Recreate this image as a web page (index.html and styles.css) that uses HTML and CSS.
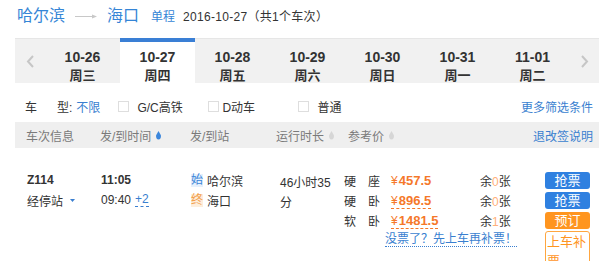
FILE: index.html
```html
<!DOCTYPE html>
<html lang="zh-CN">
<head>
<meta charset="utf-8">
<title>哈尔滨 — 海口</title>
<link rel="stylesheet" href="styles.css">
</head>
<body>
<div class="top">
  <span class="city">哈尔滨</span>
  <svg class="route-arrow" width="26" height="6" viewBox="0 0 26 6"><line x1="3" y1="3.5" x2="20" y2="3.5" stroke="#c8c8c8" stroke-width="1"/><polygon points="20,1.5 25,3.5 20,5.5" fill="#c8c8c8"/></svg>
  <span class="city city-to">海口</span>
  <span class="trip-type">单程</span>
  <span class="trip-date">2016-10-27（共1个车次）</span>
</div>

<div class="dates">
  <div class="nav"><svg width="8" height="13" viewBox="0 0 8 13"><polyline points="7,1 2,6.5 7,12" fill="none" stroke="#c6c6c6" stroke-width="2"/></svg></div>
  <div class="day"><div class="day-d">10-26</div><div class="day-w">周三</div></div>
  <div class="day day-active"><div class="day-d">10-27</div><div class="day-w">周四</div></div>
  <div class="day"><div class="day-d">10-28</div><div class="day-w">周五</div></div>
  <div class="day"><div class="day-d">10-29</div><div class="day-w">周六</div></div>
  <div class="day"><div class="day-d">10-30</div><div class="day-w">周日</div></div>
  <div class="day"><div class="day-d">10-31</div><div class="day-w">周一</div></div>
  <div class="day"><div class="day-d">11-01</div><div class="day-w">周二</div></div>
  <div class="nav nav-next"><svg width="8" height="13" viewBox="0 0 8 13"><polyline points="1,1 6,6.5 1,12" fill="none" stroke="#c6c6c6" stroke-width="2"/></svg></div>
</div>

<div class="filter">
  <span class="flt-label">车</span><span class="flt-label2">型:</span><span class="link">不限</span>
  <span class="opt opt-first"><span class="cb"></span><span class="opt-text">G/C高铁</span></span>
  <span class="opt"><span class="cb"></span><span class="opt-text opt-text-tight">D动车</span></span>
  <span class="opt"><span class="cb"></span><span class="opt-text">普通</span></span>
  <span class="link more">更多筛选条件</span>
</div>

<div class="thead">
  <span>车次信息</span>
  <span class="th-sort">发/到时间<svg class="sort sort-on" width="5" height="9" viewBox="0 0 5 9"><path d="M2.5 0 L5 4.5 Q5 8.5 2.5 8.5 Q0 8.5 0 4.5 Z"/></svg></span>
  <span>发/到站</span>
  <span class="th-sort">运行时长<svg class="sort" width="5" height="9" viewBox="0 0 5 9"><path d="M2.5 0 L5 4.5 Q5 8.5 2.5 8.5 Q0 8.5 0 4.5 Z"/></svg></span>
  <span class="th-sort">参考价<svg class="sort" width="5" height="9" viewBox="0 0 5 9"><path d="M2.5 0 L5 4.5 Q5 8.5 2.5 8.5 Q0 8.5 0 4.5 Z"/></svg></span>
  <span class="link th-right">退改签说明</span>
</div>

<div class="train">
  <div class="col">
    <div class="line bold">Z114</div>
    <div class="line">经停站<svg class="tri" width="5" height="3" viewBox="0 0 5 3"><polygon points="0,0 5,0 2.5,3" fill="#3a7fd0"/></svg></div>
  </div>
  <div class="col">
    <div class="line bold">11:05</div>
    <div class="line">09:40<span class="plus">+2</span></div>
  </div>
  <div class="col">
    <div class="line"><span class="stn stn-start">始</span>哈尔滨</div>
    <div class="line"><span class="stn stn-end">终</span>海口</div>
  </div>
  <div class="col duration">46小时35分</div>
  <div class="seats">
    <span>硬　座</span><span class="price"><span class="yen">¥</span>457.5</span><span>余<span class="left">0</span>张</span><span class="btn">抢票</span>
    <span>硬　卧</span><span class="price"><span class="price-u"><span class="yen">¥</span>896.5</span></span><span>余<span class="left">0</span>张</span><span class="btn">抢票</span>
    <span>软　卧</span><span class="price"><span class="price-u"><span class="yen">¥</span>1481.5</span></span><span>余<span class="left">1</span>张</span><span class="btn btn-orange">预订</span>
    <span class="nosale"><span class="nosale-link">没票了？先上车再补票！</span></span><span class="btn-outline">上车补票</span>
  </div>
</div>
</body>
</html>
```

FILE: styles.css
```css
body {
  margin: 0;
  background: #fff;
  color: #333;
  font-family: "Liberation Sans", Arial, "Noto Sans CJK SC", sans-serif;
  font-size: 12px;
}

.link { color: #3a7fd0; }
.bold { font-weight: bold; }

/* title */
.top {
  display: flex;
  align-items: baseline;
  height: 32px;
  padding: 6px 0 0 17px;
}
.city {
  font-size: 16px;
  line-height: 20px;
  color: #3585d6;
}
.route-arrow {
  align-self: flex-start;
  margin: 7px 9px 0 7px;
}
.trip-type {
  margin-left: 12px;
  color: #3585d6;
}
.trip-date {
  margin-left: 8px;
  color: #333;
  letter-spacing: 0.3px;
}

/* date strip */
.dates {
  display: flex;
  height: 44px;
  margin-left: 15px;
  background: #f1f1f1;
  border-top: 1px solid #e6e6e6;
}
.nav {
  width: 30px;
  display: flex;
  align-items: center;
  justify-content: center;
}
.nav-next { flex: 1; }
.day {
  width: 75px;
  box-sizing: border-box;
  padding-top: 10px;
  text-align: center;
  font-weight: bold;
  color: #333;
}
.day-d { font-size: 14px; line-height: 16px; }
.day-w { font-size: 13px; line-height: 18px; margin-top: 2px; }
.day-active {
  margin-top: -1px;
  padding-top: 7px;
  background: #fff;
  border-top: 4px solid #3a7fd5;
}

/* filter */
.filter {
  display: flex;
  align-items: center;
  height: 24px;
  margin-left: 15px;
  padding: 11px 6px 4px 10px;
}
.flt-label { margin-right: 20px; }
.flt-label2 { margin-right: 4px; }
.opt {
  display: flex;
  align-items: center;
  width: 90px;
}
.opt-first { margin-left: 18px; }
.cb {
  width: 9px;
  height: 9px;
  border: 1px solid #dedede;
  background: #fff;
}
.opt-text { margin-left: 8px; }
.opt-text-tight { margin-left: 3px; }
.more { margin-left: auto; }

/* table head */
.thead {
  display: grid;
  grid-template-columns: 74px 90px 86px 72px 1fr auto;
  align-items: center;
  height: 26px;
  margin-left: 15px;
  padding: 0 6px 0 11px;
  background: #efefef;
  color: #7a7a7a;
}
.th-sort { display: flex; align-items: center; }
.sort { margin-left: 5px; fill: #d6d6d6; }
.sort-on { fill: #3a86dc; }
.th-right { justify-self: end; }

/* train row */
.train {
  display: grid;
  grid-template-columns: 74px 90px 88px 65px 1fr;
  margin-left: 15px;
  padding: 22px 9px 0 12px;
}
.line {
  display: flex;
  align-items: center;
  height: 20px;
}
.tri { margin-left: 7px; }
.plus {
  margin-left: 4px;
  color: #3a7fd0;
  line-height: 13px;
  border-bottom: 1px dashed #3a7fd0;
}
.stn {
  width: 12px;
  height: 13px;
  margin-right: 4px;
  line-height: 13px;
  text-align: center;
}
.stn-start { color: #3a86d8; background: #e6f0fc; }
.stn-end { color: #f3a04c; background: #fdeedc; }
.duration {
  padding: 3px 6px 0 1px;
  line-height: 20px;
}

.seats {
  display: grid;
  grid-template-columns: 47px 89px 65px 45px;
  grid-template-rows: 20px 20px 20px auto;
  align-items: center;
}
.price {
  color: #f5782a;
  font-weight: bold;
  font-size: 13px;
}
.price-u {
  border-bottom: 1px dashed #f5782a;
  line-height: 14px;
}
.yen { font-weight: normal; font-size: 12px; margin-right: 1px; }
.left { color: #ffb07a; }
.btn {
  height: 17px;
  line-height: 17px;
  border-radius: 3px;
  background: #2f80e0;
  color: #fff;
  font-size: 13px;
  text-align: center;
}
.btn-orange { background: #ff951f; }
.nosale {
  grid-column: 1 / 4;
  align-self: start;
  margin-top: 2px;
  padding-left: 41px;
}
.nosale-link {
  display: inline-block;
  color: #3a7fd0;
  line-height: 14px;
  border-bottom: 1px dotted #3a7fd0;
}
.btn-outline {
  align-self: start;
  margin-top: 1px;
  box-sizing: border-box;
  padding-left: 1px;
  border: 1px solid #ffa640;
  border-radius: 3px;
  color: #ff951f;
  font-size: 13px;
  line-height: 20px;
}
```
